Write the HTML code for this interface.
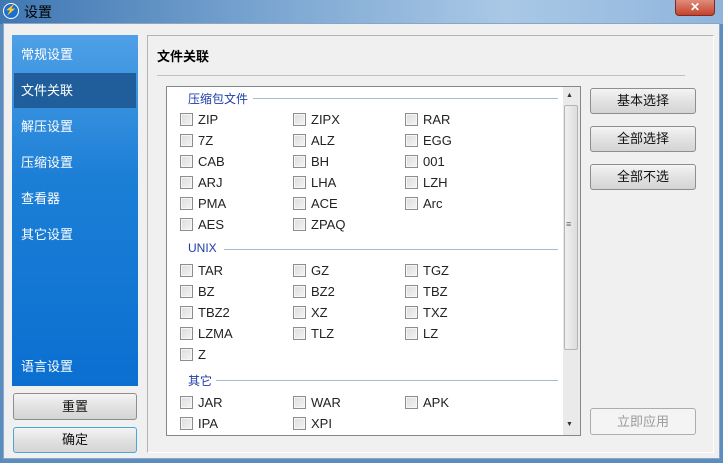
<!DOCTYPE html>
<html><head><meta charset="utf-8"><style>
*{box-sizing:border-box;margin:0;padding:0}
body{width:723px;height:463px;overflow:hidden;position:relative;font-family:"Liberation Sans","Noto Sans CJK SC",sans-serif;font-size:13px;background:#5b8dbf}
.abs{position:absolute}
#title{left:0;top:0;width:723px;height:24px;background:linear-gradient(90deg,#3f77b3,#7fa9d3 40%,#a9c8e6 70%,#8fb5dc)}
#client{left:3px;top:23px;width:717px;height:436px;background:#f0f0f0;border:1px solid #8aa6c4}
#nav{left:12px;top:35px;width:126px;height:351px;background:linear-gradient(180deg,#4fa0e6,#1c7fd6 40%,#0b6fd1)}
.nav{position:absolute;left:9px;color:#fff;font-size:13px}
.sel{left:14px;top:73px;width:122px;height:35px;background:#1f5e9a}
.btn{position:absolute;border:1px solid #8e8e8e;border-radius:3px;background:linear-gradient(#f4f4f4,#e2e2e2 50%,#d4d4d4);text-align:center;font-size:13px;color:#111}
.cb{position:absolute;width:13px;height:13px;border:1px solid #8d8d8d;background:linear-gradient(135deg,#dcdcdc,#f4f4f4);box-shadow:inset 0 0 0 1px #f6f6f6}
.lb{position:absolute;font-size:13px;color:#222}
.gh{position:absolute;color:#1d3ca8;font-size:12px}
.gl{position:absolute;height:1px;background:#a8b9d6}
</style></head><body>
<div id="title" class="abs"></div>
<div class="abs" style="left:3px;top:3px;width:16px;height:16px;border-radius:50%;background:#1c6ed0;border:1px solid #fff;color:#fff;font-size:10px;text-align:center;line-height:14px">⚡</div>
<div class="abs" style="left:24px;top:2px;font-size:14px;color:#000">设置</div>
<div class="abs" style="left:675px;top:0;width:40px;height:16px;background:linear-gradient(#e08c7c,#c5432c);border:1px solid #7d2b20;border-top:none;border-radius:0 0 4px 4px;color:#fff;text-align:center;font-weight:bold;font-size:12px;line-height:14px">✕</div>
<div id="client" class="abs"></div>
<div id="nav" class="abs"></div>
<div class="abs sel"></div>
<div class="nav abs" style="left:21px;top:44px">常规设置</div>
<div class="nav abs" style="left:21px;top:80px">文件关联</div>
<div class="nav abs" style="left:21px;top:116px">解压设置</div>
<div class="nav abs" style="left:21px;top:152px">压缩设置</div>
<div class="nav abs" style="left:21px;top:188px">查看器</div>
<div class="nav abs" style="left:21px;top:224px">其它设置</div>
<div class="nav abs" style="left:21px;top:356px">语言设置</div>
<div class="btn" style="left:13px;top:393px;width:124px;height:27px;line-height:25px">重置</div>
<div class="btn" style="left:13px;top:427px;width:124px;height:26px;line-height:24px;border-color:#4aa6d8">确定</div>
<div class="abs" style="left:147px;top:35px;width:567px;height:418px;border:1px solid #b4b4b4;border-right-color:#fff;border-bottom-color:#fff"></div>
<div class="abs" style="left:157px;top:46px;font-weight:bold;font-size:13px">文件关联</div>
<div class="abs" style="left:157px;top:75px;width:528px;height:1px;background:#c0c0c0"></div>
<div class="abs" style="left:166px;top:86px;width:415px;height:350px;background:#fff;border:1px solid #828790"></div>
<div class="abs" style="left:563px;top:87px;width:17px;height:348px;background:#eaeaea"></div>
<div class="abs" style="left:564px;top:105px;width:14px;height:245px;background:linear-gradient(90deg,#f0f0f0,#dcdcdc);border:1px solid #b5b5b5;border-radius:2px"></div>
<div class="abs" style="left:566px;top:92px;font-size:7px;color:#333">▲</div>
<div class="abs" style="left:566px;top:421px;font-size:7px;color:#333">▼</div>
<div class="abs" style="left:566px;top:219px;font-size:9px;color:#666">≡</div>
<div class="gh" style="left:188px;top:90px">压缩包文件</div><div class="gl" style="left:253px;top:98px;width:305px"></div>
<div class="gh" style="left:188px;top:241px">UNIX</div><div class="gl" style="left:224px;top:249px;width:334px"></div>
<div class="gh" style="left:188px;top:372px">其它</div><div class="gl" style="left:216px;top:380px;width:342px"></div>
<div id="items"></div>
<div class="btn" style="left:590px;top:88px;width:106px;height:26px;line-height:24px">基本选择</div>
<div class="btn" style="left:590px;top:126px;width:106px;height:26px;line-height:24px">全部选择</div>
<div class="btn" style="left:590px;top:164px;width:106px;height:26px;line-height:24px">全部不选</div>
<div class="btn" style="left:590px;top:408px;width:106px;height:27px;line-height:25px;color:#9a9a9a;background:#f4f4f4;border-color:#adadad">立即应用</div>
<script>
var rows=[[119,["ZIP","ZIPX","RAR"]],[140,["7Z","ALZ","EGG"]],[161,["CAB","BH","001"]],[182,["ARJ","LHA","LZH"]],[203,["PMA","ACE","Arc"]],[224,["AES","ZPAQ"]],[270,["TAR","GZ","TGZ"]],[291,["BZ","BZ2","TBZ"]],[312,["TBZ2","XZ","TXZ"]],[333,["LZMA","TLZ","LZ"]],[354,["Z"]],[402,["JAR","WAR","APK"]],[423,["IPA","XPI"]]];
var xs=[180,293,405],h="";
rows.forEach(function(r){r[1].forEach(function(t,i){h+='<div class="cb" style="left:'+xs[i]+'px;top:'+(r[0]-6)+'px"></div><div class="lb" style="left:'+(xs[i]+18)+'px;top:'+(r[0]-7)+'px">'+t+'</div>';});});
document.getElementById("items").innerHTML=h;
</script>
</body></html>
